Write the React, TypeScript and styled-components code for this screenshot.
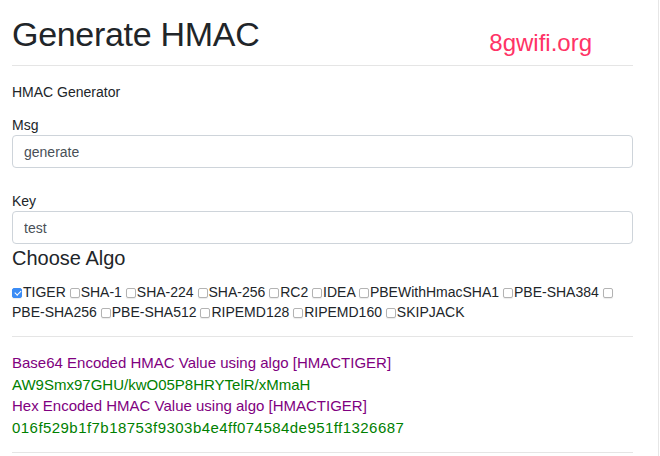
import styled, { createGlobalStyle } from "styled-components";

const GlobalStyle = createGlobalStyle`
  body {
    margin: 0;
    background: #fff;
    color: #212529;
    font-family: "Liberation Sans", Arial, Helvetica, sans-serif;
    font-size: 14px;
    line-height: 20px;
  }
`;

const Page = styled.div`
  box-sizing: border-box;
  width: 659px;
  min-height: 456px;
  padding: 12px 25px 0 12px;
  border-right: 1px solid #e6e6e6;
`;

const Header = styled.div`
  display: flex;
  justify-content: space-between;
  align-items: flex-start;
`;

const Title = styled.h1`
  margin: 0;
  font-size: 34px;
  line-height: 44px;
  font-weight: 400;
  letter-spacing: -0.3px;
`;

const Brand = styled.div`
  margin: 19px 41px 0 0;
  font-size: 24px;
  line-height: 24px;
  color: #ff3366;
`;

const Rule = styled.div<{ $top: number }>`
  height: 1px;
  background: #e5e5e5;
  margin-top: ${(p) => p.$top}px;
`;

const Intro = styled.div`
  margin-top: 16px;
`;

const Label = styled.label<{ $top: number }>`
  display: block;
  margin-top: ${(p) => p.$top}px;
`;

const Input = styled.input`
  display: block;
  box-sizing: border-box;
  width: 100%;
  height: 33px;
  margin: 0;
  padding: 0 11px;
  border: 1px solid #ced4da;
  border-radius: 4px;
  font-family: inherit;
  font-size: 14px;
  color: #495057;
  background: #fff;
  outline: none;
`;

const SubTitle = styled.h3`
  margin: 2px 0 0;
  font-size: 20px;
  line-height: 24px;
  font-weight: 400;
`;

const Algos = styled.div`
  margin-top: 12px;
`;

const Box = styled.input`
  appearance: none;
  position: relative;
  box-sizing: border-box;
  width: 10px;
  height: 10px;
  margin: 0 1px 0 0;
  border: 1px solid #b3b3b3;
  border-radius: 2px;
  background: #fff;
  vertical-align: -1px;
  box-shadow: 0 1px 1px rgba(0, 0, 0, 0.08);

  &:checked {
    background: #3b8cf5;
    border-color: #3b8cf5;
  }
  &:checked::after {
    content: "";
    position: absolute;
    left: 2.5px;
    top: 0px;
    width: 2.5px;
    height: 5px;
    border: solid #fff;
    border-width: 0 1.5px 1.5px 0;
    transform: rotate(45deg);
  }
`;

const Results = styled.div`
  margin-top: 15px;
  font-size: 15px;
  line-height: 21.5px;
`;

const Line = styled.div<{ $tone: "title" | "value"; $wide?: boolean }>`
  color: ${(p) => (p.$tone === "title" ? "#800080" : "#008000")};
  letter-spacing: ${(p) => (p.$wide ? "0.45px" : "normal")};
`;

const algos = [
  { name: "TIGER", checked: true },
  { name: "SHA-1" },
  { name: "SHA-224" },
  { name: "SHA-256" },
  { name: "RC2" },
  { name: "IDEA" },
  { name: "PBEWithHmacSHA1" },
  { name: "PBE-SHA384" },
  { name: "PBE-SHA256" },
  { name: "PBE-SHA512" },
  { name: "RIPEMD128" },
  { name: "RIPEMD160" },
  { name: "SKIPJACK" },
];

const App = () => {
  return (
    <>
      <GlobalStyle />
      <Page>
        <Header>
          <Title>Generate HMAC</Title>
          <Brand>8gwifi.org</Brand>
        </Header>
        <Rule $top={9} />
        <Intro>HMAC Generator</Intro>
        <Label $top={13} htmlFor="msg">Msg</Label>
        <Input id="msg" defaultValue="generate" />
        <Label $top={23} htmlFor="key">Key</Label>
        <Input id="key" defaultValue="test" />
        <SubTitle>Choose Algo</SubTitle>
        <Algos>
          {algos.map((a) => (
            <span key={a.name}>
              <Box type="checkbox" defaultChecked={!!a.checked} />
              {a.name}{" "}
            </span>
          ))}
        </Algos>
        <Rule $top={14} />
        <Results>
          <Line $tone="title">Base64 Encoded HMAC Value using algo [HMACTIGER]</Line>
          <Line $tone="value">AW9Smx97GHU/kwO05P8HRYTelR/xMmaH</Line>
          <Line $tone="title">Hex Encoded HMAC Value using algo [HMACTIGER]</Line>
          <Line $tone="value" $wide>
            016f529b1f7b18753f9303b4e4ff074584de951ff1326687
          </Line>
        </Results>
        <Rule $top={14} />
      </Page>
    </>
  );
};

export default App;
